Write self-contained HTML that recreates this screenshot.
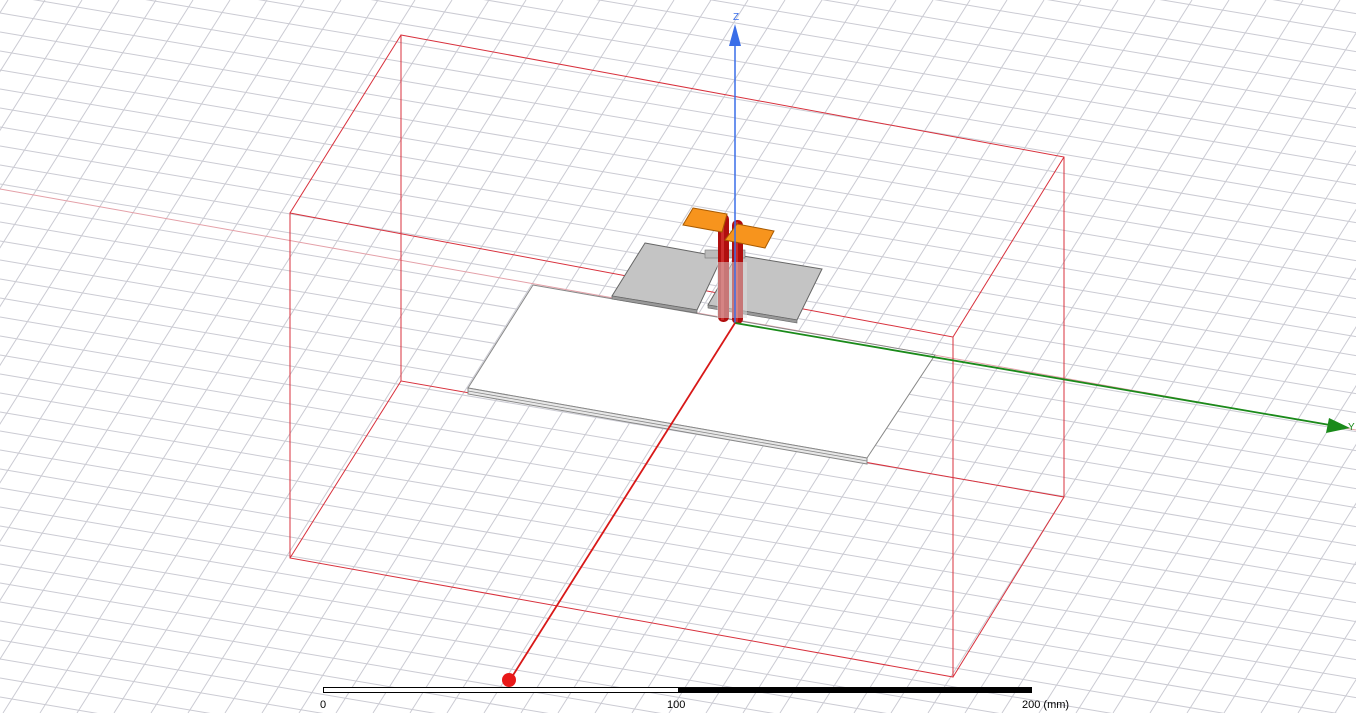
<!DOCTYPE html>
<html><head><meta charset="utf-8"><style>
html,body{margin:0;padding:0;background:#fff;overflow:hidden;width:1356px;height:713px}
svg{display:block;overflow:hidden}
text{font-family:"Liberation Sans",sans-serif}
</style></head><body>
<svg width="1356" height="713" viewBox="0 0 1356 713" xmlns="http://www.w3.org/2000/svg">
<rect width="1356" height="713" fill="#fff"/>
<g stroke="#cbcbd3" stroke-width="1" fill="none">
<path d="M8 0l-449 713M45 0l-449 713M82 0l-449 713M119 0l-449 713M156 0l-449 713M193 0l-449 713M230 0l-449 713M267 0l-449 713M304 0l-449 713M341 0l-449 713M378 0l-449 713M415 0l-449 713M452 0l-449 713M489 0l-449 713M526 0l-449 713M563 0l-449 713M600 0l-449 713M637 0l-449 713M674 0l-449 713M711 0l-449 713M748 0l-449 713M785 0l-449 713M822 0l-449 713M859 0l-449 713M896 0l-449 713M933 0l-449 713M970 0l-449 713M1007 0l-449 713M1044 0l-449 713M1081 0l-449 713M1118 0l-449 713M1155 0l-449 713M1192 0l-449 713M1229 0l-449 713M1266 0l-449 713M1303 0l-449 713M1340 0l-449 713M1377 0l-449 713M1414 0l-449 713M1451 0l-449 713M1488 0l-449 713M1525 0l-449 713M1562 0l-449 713M1599 0l-449 713M1636 0l-449 713M1673 0l-449 713M1710 0l-449 713M1747 0l-449 713M1784 0l-449 713M1821 0l-449 713"/>
<path d="M0 -234l1356 228.6M0 -215l1356 228.6M0 -196l1356 228.6M0 -177l1356 228.6M0 -158l1356 228.6M0 -139l1356 228.6M0 -120l1356 228.6M0 -101l1356 228.6M0 -82l1356 228.6M0 -63l1356 228.6M0 -44l1356 228.6M0 -25l1356 228.6M0 -6l1356 228.6M0 13l1356 228.6M0 32l1356 228.6M0 51l1356 228.6M0 70l1356 228.6M0 89l1356 228.6M0 108l1356 228.6M0 127l1356 228.6M0 146l1356 228.6M0 165l1356 228.6M0 184l1356 228.6M0 203l1356 228.6M0 222l1356 228.6M0 241l1356 228.6M0 260l1356 228.6M0 279l1356 228.6M0 298l1356 228.6M0 317l1356 228.6M0 336l1356 228.6M0 355l1356 228.6M0 374l1356 228.6M0 393l1356 228.6M0 412l1356 228.6M0 431l1356 228.6M0 450l1356 228.6M0 469l1356 228.6M0 488l1356 228.6M0 507l1356 228.6M0 526l1356 228.6M0 545l1356 228.6M0 564l1356 228.6M0 583l1356 228.6M0 602l1356 228.6M0 621l1356 228.6M0 640l1356 228.6M0 659l1356 228.6M0 678l1356 228.6M0 697l1356 228.6"/>
</g>
<line x1="0" y1="189" x2="1356" y2="430" stroke="#e4a0a8" stroke-width="1"/>
<g stroke="#d8303c" stroke-width="1" fill="none">
<polygon points="401,35 1064,157 1064,497 401,381"/>
<polygon points="290,213 953,337 953,677 290,558"/>
<line x1="401" y1="35" x2="290" y2="213"/>
<line x1="1064" y1="157" x2="953" y2="337"/>
<line x1="1064" y1="497" x2="953" y2="677"/>
<line x1="401" y1="381" x2="290" y2="558"/>
</g>
<polygon points="533,285 935,355 867,458 468,388" fill="#fff" stroke="#888" stroke-width="1"/>
<polygon points="468,388 867,458 867,464 468,394" fill="#e8e8e8" stroke="#888" stroke-width="1"/>
<line x1="468" y1="391" x2="867" y2="461" stroke="#888" stroke-width="0.8"/>
<polygon points="645,243 722,257 697,310 612,296" fill="#c4c4c4" stroke="#666" stroke-width="1"/>
<polygon points="612,296 697,310 697,313 612,299" fill="#999" stroke="#666" stroke-width="0.6"/>
<polygon points="737,255 822,269 797,320 708,305" fill="#c4c4c4" stroke="#666" stroke-width="1"/>
<polygon points="708,305 797,320 797,323 708,308" fill="#999" stroke="#666" stroke-width="0.6"/>
<rect x="705" y="250" width="40" height="8" fill="#bbb" stroke="#777" stroke-width="0.6"/>
<rect x="718" y="214" width="11" height="108" rx="5" fill="#b00e0e"/>
<rect x="732" y="220" width="11" height="104" rx="5" fill="#b00e0e"/>
<rect x="721" y="216" width="3" height="104" fill="#e04040" opacity=".6"/>
<rect x="735" y="222" width="3" height="100" fill="#e04040" opacity=".6"/>
<rect x="717" y="262" width="30" height="56" fill="#ddd" opacity=".5"/>
<polygon points="693,208 727,214 722,232 683,225" fill="#f7941d" stroke="#a85a00" stroke-width="1"/>
<polygon points="737,224 774,231 765,248 725,240" fill="#f7941d" stroke="#a85a00" stroke-width="1"/>
<line x1="735" y1="323" x2="735" y2="40" stroke="#3a6ee8" stroke-width="1.5"/>
<polygon points="735,24 741,46 729,46" fill="#3a6ee8"/>
<text x="733" y="20" font-size="10" fill="#3a6ee8">Z</text>
<line x1="735" y1="323" x2="1330" y2="425" stroke="#1a8a1a" stroke-width="1.8"/>
<polygon points="1350,428 1326,433 1329,418" fill="#1a8a1a"/>
<text x="1348" y="430" font-size="10" fill="#1a8a1a">Y</text>
<line x1="735" y1="323" x2="510" y2="680" stroke="#d81818" stroke-width="1.8"/>
<circle cx="509" cy="680" r="7" fill="#e81818"/>
<rect x="323.5" y="687.5" width="355" height="5" fill="#fff" stroke="#000" stroke-width="1"/>
<rect x="678" y="687" width="354" height="6" fill="#000"/>
<text x="320" y="708" font-size="11" fill="#000">0</text>
<text x="667" y="708" font-size="11" fill="#000">100</text>
<text x="1022" y="708" font-size="11" fill="#000">200 (mm)</text>
</svg>
</body></html>
